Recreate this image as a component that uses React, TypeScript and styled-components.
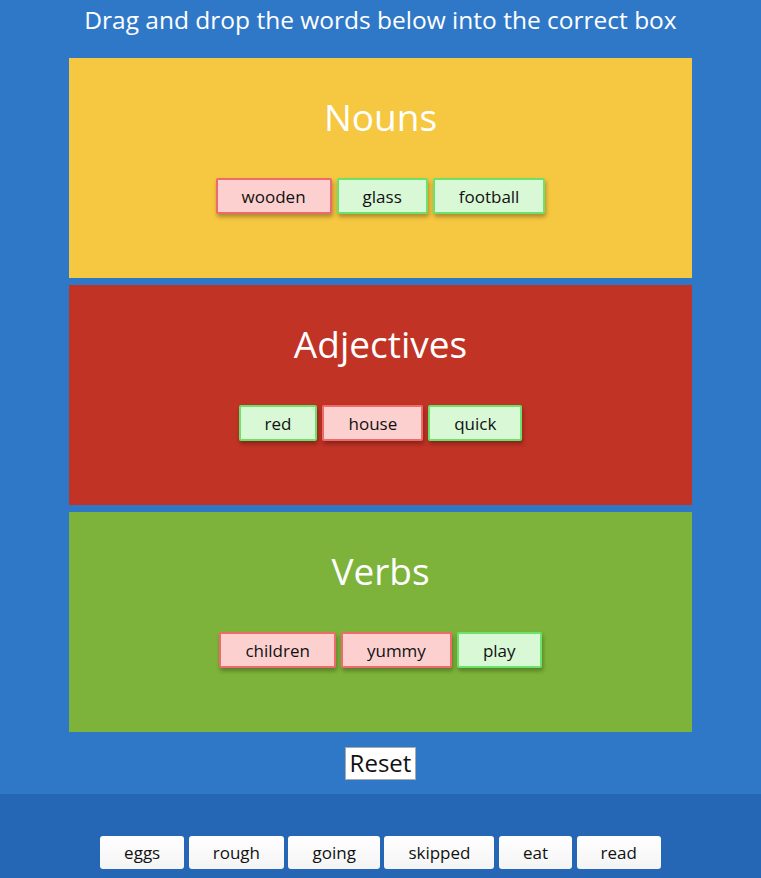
import React from "react";
import styled, { createGlobalStyle } from "styled-components";

const Global = createGlobalStyle`
  html, body { margin: 0; padding: 0; }
  body {
    background: #2f78c8;
    font-family: "Open Sans", "Noto Sans", sans-serif;
  }
`;

const Page = styled.div`
  display: flex;
  flex-direction: column;
  align-items: center;
  min-height: 878px;
`;

const Title = styled.h1`
  margin: 0;
  padding-top: 3px;
  height: 55px;
  font-size: 24.5px;
  font-weight: 500;
  color: #fff;
  text-align: center;
  line-height: 34px;
`;

const Boxes = styled.div`
  display: flex;
  flex-direction: column;
  gap: 7px;
  width: 623px;
`;

const Box = styled.div<{ $bg: string }>`
  background: ${(p) => p.$bg};
  height: 220px;
  display: flex;
  flex-direction: column;
  align-items: center;
`;

const BoxTitle = styled.h2`
  margin: 0;
  padding-top: 34px;
  height: 86px;
  font-size: 37px;
  font-weight: 500;
  color: #fff;
  line-height: 50px;
`;

const Row = styled.div`
  display: flex;
  gap: 5px;
  justify-content: center;
`;

const Chip = styled.div<{ $ok: boolean }>`
  height: 36px;
  box-sizing: border-box;
  padding: 0 24px;
  display: flex;
  align-items: center;
  font-size: 17px;
  color: #111;
  border-radius: 2px;
  border: 2px solid ${(p) => (p.$ok ? "#6be36b" : "#ef6b6b")};
  background: ${(p) => (p.$ok ? "#d9f8d6" : "#fdd0d0")};
  box-shadow: 1px 3px 4px rgba(0, 0, 0, 0.3);
`;

const ResetWrap = styled.div`
  height: 62px;
  display: flex;
  align-items: center;
  justify-content: center;
`;

const ResetButton = styled.button`
  font-family: "Open Sans", "Noto Sans", sans-serif;
  font-size: 24px;
  color: #111;
  background: #fff;
  border: 1px solid #aaa;
  padding: 0 4px;
  height: 33px;
  line-height: 30px;
  border-radius: 0;
`;

const Bank = styled.div`
  align-self: stretch;
  flex: 1;
  background: #2667b5;
  display: flex;
  justify-content: center;
  align-items: flex-end;
  padding-bottom: 9px;
  gap: 4.5px;
`;

const BankChip = styled.div`
  height: 33px;
  box-sizing: border-box;
  padding: 0 24px;
  display: flex;
  align-items: center;
  font-size: 17px;
  color: #111;
  border-radius: 3px;
  background: linear-gradient(#ffffff, #f4f4f4);
`;

const boxes = [
  {
    name: "Nouns",
    bg: "#f6c740",
    words: [
      ["wooden", false],
      ["glass", true],
      ["football", true],
    ],
  },
  {
    name: "Adjectives",
    bg: "#c13325",
    words: [
      ["red", true],
      ["house", false],
      ["quick", true],
    ],
  },
  {
    name: "Verbs",
    bg: "#7db33a",
    words: [
      ["children", false],
      ["yummy", false],
      ["play", true],
    ],
  },
] as const;

const bank = ["eggs", "rough", "going", "skipped", "eat", "read"];

export default function App() {
  return (
    <>
      <Global />
      <Page>
        <Title>Drag and drop the words below into the correct box</Title>
        <Boxes>
          {boxes.map((b) => (
            <Box key={b.name} $bg={b.bg}>
              <BoxTitle>{b.name}</BoxTitle>
              <Row>
                {b.words.map(([w, ok]) => (
                  <Chip key={w} $ok={ok}>
                    {w}
                  </Chip>
                ))}
              </Row>
            </Box>
          ))}
        </Boxes>
        <ResetWrap>
          <ResetButton>Reset</ResetButton>
        </ResetWrap>
        <Bank>
          {bank.map((w) => (
            <BankChip key={w}>{w}</BankChip>
          ))}
        </Bank>
      </Page>
    </>
  );
}
